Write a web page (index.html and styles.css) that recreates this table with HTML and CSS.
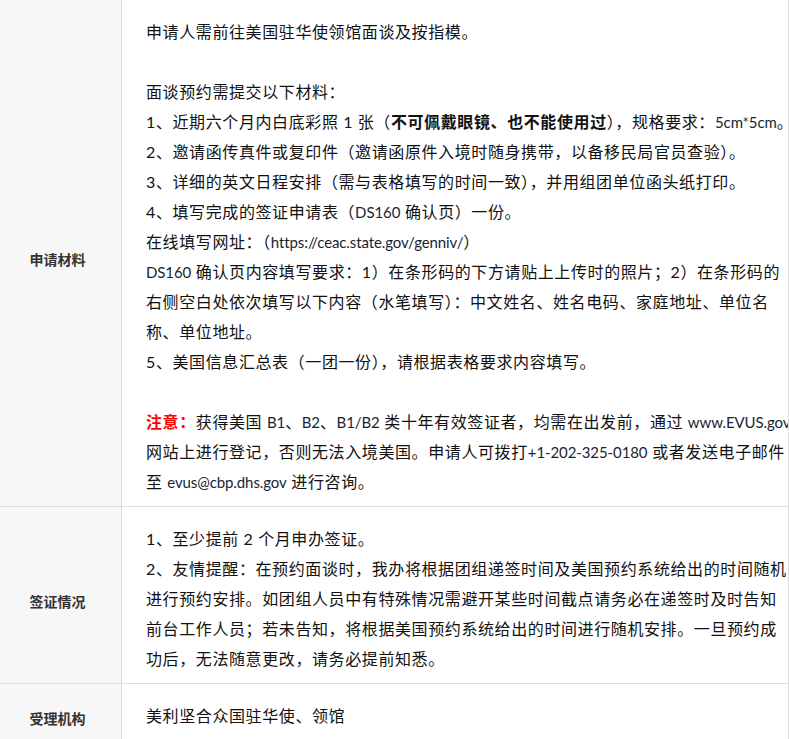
FILE: index.html
```html
<!DOCTYPE html>
<html lang="zh-CN">
<head>
<meta charset="utf-8">
<title>签证须知</title>
<link rel="stylesheet" href="styles.css">
</head>
<body>
<div class="info">
  <div class="row">
    <div class="label">申请材料</div>
    <div class="content">
      申请人需前往美国驻华使领馆面谈及按指模。<br>
      <br>
      面谈预约需提交以下材料：<br>
      1、近期六个月内白底彩照 1 张（<b>不可佩戴眼镜、也不能使用过</b>），规格要求：<span class="en">5cm*5cm</span>。<br>
      2、邀请函传真件或复印件（邀请函原件入境时随身携带，以备移民局官员查验）。<br>
      3、详细的英文日程安排（需与表格填写的时间一致），并用组团单位函头纸打印。<br>
      4、填写完成的签证申请表（<span class="en">DS160</span> 确认页）一份。<br>
      在线填写网址：（<span class="en">https://ceac.state.gov/genniv/</span>）<br>
      <span class="en">DS160</span> 确认页内容填写要求：1）在条形码的下方请贴上上传时的照片；2）在条形码的<br>
      右侧空白处依次填写以下内容（水笔填写）：中文姓名、姓名电码、家庭地址、单位名<br>
      称、单位地址。<br>
      5、美国信息汇总表（一团一份），请根据表格要求内容填写。<br>
      <br>
      <b class="warn">注意：</b>获得美国 <span class="en">B1</span>、<span class="en">B2</span>、<span class="en">B1/B2</span> 类十年有效签证者，均需在出发前，通过 <span class="en">www.EVUS.gov</span><br>
      网站上进行登记，否则无法入境美国。申请人可拨打<span class="en">+1-202-325-0180</span> 或者发送电子邮件<br>
      至 <span class="en">evus@cbp.dhs.gov</span> 进行咨询。
    </div>
  </div>
  <div class="row">
    <div class="label">签证情况</div>
    <div class="content">
      1、至少提前 2 个月申办签证。<br>
      2、友情提醒：在预约面谈时，我办将根据团组递签时间及美国预约系统给出的时间随机<br>
      进行预约安排。如团组人员中有特殊情况需避开某些时间截点请务必在递签时及时告知<br>
      前台工作人员；若未告知，将根据美国预约系统给出的时间进行随机安排。一旦预约成<br>
      功后，无法随意更改，请务必提前知悉。
    </div>
  </div>
  <div class="row">
    <div class="label">受理机构</div>
    <div class="content">美利坚合众国驻华使、领馆</div>
  </div>
</div>
</body>
</html>
```
FILE: styles.css
```css
html, body {
  margin: 0;
  padding: 0;
  background: #fff;
}

.info {
  width: 789px;
}

.row {
  display: flex;
  border-bottom: 1px solid #dcdcdc;
}

.label {
  flex: none;
  width: 122px;
  box-sizing: border-box;
  border-right: 1px solid #dcdcdc;
  background: #f7f7f7;
  padding: 11px 6px 0 0;
  display: flex;
  align-items: center;
  justify-content: center;
  font: bold 14px/20px "Noto Sans CJK SC", sans-serif;
  color: #333;
}

.content {
  flex: 1;
  min-width: 0;
  padding: 17px 1px 9px 24px;
  border-right: 1px solid #dcdcdc;
  font: 16px/30px "Lato", "Noto Sans CJK SC", sans-serif;
  letter-spacing: 0.6px;
  color: #111;
  white-space: nowrap;
  overflow: hidden;
}

.content b {
  font-weight: bold;
}

.en {
  font-size: 15px;
  letter-spacing: -0.1px;
  color: #1a1f33;
}

.warn {
  color: #f00;
}
```
